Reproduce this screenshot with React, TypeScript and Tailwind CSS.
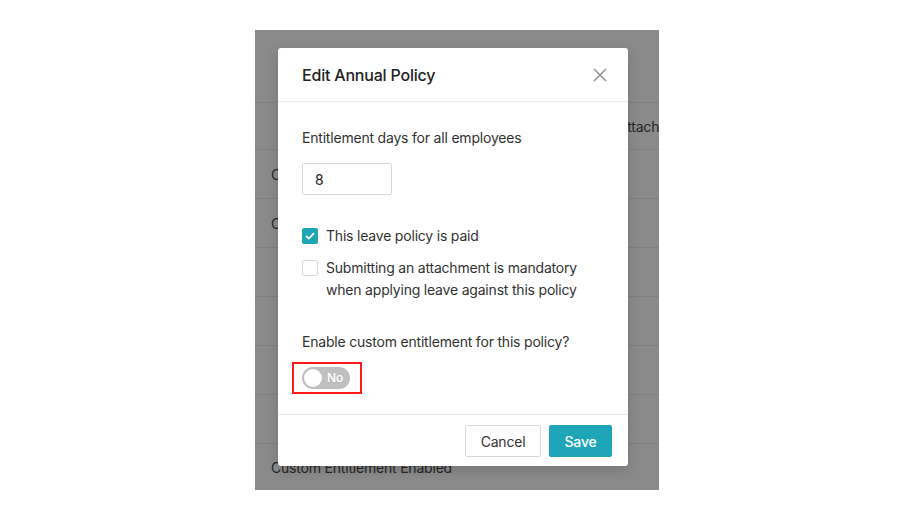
import React, { useState } from "react";

const rows = ["C", "C", "", "", "", ""];

const App = () => {
  const [paid, setPaid] = useState(true);
  const [mandatory, setMandatory] = useState(false);
  const [custom, setCustom] = useState(false);
  const [days, setDays] = useState("8");

  return (
    <div
      className="w-full h-[521px] bg-white pt-[30px] pl-[255px] tracking-[-0.2px]"
      style={{ fontFamily: "Inter, 'Noto Sans', sans-serif" }}
    >
      <div className="relative w-[404px] h-[460px] bg-[#8a8a8a] overflow-hidden text-[14px] text-[#262626]">
        {/* page behind the overlay */}
        <div className="h-[72px]" />
        <div className="h-[47px] border-t border-[#7f7f7f] flex items-center pl-[363px] whitespace-nowrap">
          Attachment
        </div>
        {rows.map((r, i) => (
          <div key={i} className="h-[49px] border-t border-[#7f7f7f] flex items-center pl-[16px]">
            {r}
          </div>
        ))}
        <div className="h-[47px] border-t border-[#7f7f7f] flex items-center pl-[16px] whitespace-nowrap">
          Custom Entitlement Enabled
        </div>

        {/* modal */}
        <div className="absolute left-[23px] top-[18px] w-[350px] bg-white rounded-[3px] shadow-[0_4px_12px_rgba(0,0,0,0.15)] flex flex-col">
          <div className="h-[54px] border-b border-[#e8e8e8] flex items-center justify-between pl-[24px] pr-[20px]">
            <span className="text-[16px] font-medium text-[#222]">Edit Annual Policy</span>
            <button className="w-[16px] h-[16px] flex items-center justify-center text-[#8c8c8c]">
              <svg width="14" height="14" viewBox="0 0 14 14" fill="none" stroke="currentColor" strokeWidth="1.4">
                <path d="M1 1L13 13M13 1L1 13" />
              </svg>
            </button>
          </div>

          <div className="px-[24px] pt-[26px] pb-[20px] flex flex-col text-[14px] text-[#333]">
            <label className="leading-[20px]">Entitlement days for all employees</label>
            <input
              value={days}
              onChange={(e) => setDays(e.target.value)}
              className="mt-[15px] w-[90px] h-[32px] border border-[#d9d9d9] rounded-[2px] px-[12px] text-[14px] text-[#222] outline-none"
            />

            <div className="mt-[30px] flex items-start gap-[8px] leading-[22px] cursor-pointer" onClick={() => setPaid(!paid)}>
              <span
                className={
                  paid
                    ? "mt-[3px] w-[16px] h-[16px] rounded-[2px] bg-[#1fa5b8] border border-[#1fa5b8] flex items-center justify-center shrink-0"
                    : "mt-[3px] w-[16px] h-[16px] rounded-[2px] bg-white border border-[#d9d9d9] shrink-0"
                }
              >
                {paid && (
                  <svg width="10" height="8" viewBox="0 0 10 8" fill="none" stroke="white" strokeWidth="1.8">
                    <path d="M1 4L3.8 6.6L9 1.2" />
                  </svg>
                )}
              </span>
              <span>This leave policy is paid</span>
            </div>

            <div className="mt-[10px] flex items-start gap-[8px] leading-[22px] cursor-pointer" onClick={() => setMandatory(!mandatory)}>
              <span
                className={
                  mandatory
                    ? "mt-[3px] w-[16px] h-[16px] rounded-[2px] bg-[#1fa5b8] border border-[#1fa5b8] flex items-center justify-center shrink-0"
                    : "mt-[3px] w-[16px] h-[16px] rounded-[2px] bg-white border border-[#d9d9d9] shrink-0"
                }
              >
                {mandatory && (
                  <svg width="10" height="8" viewBox="0 0 10 8" fill="none" stroke="white" strokeWidth="1.8">
                    <path d="M1 4L3.8 6.6L9 1.2" />
                  </svg>
                )}
              </span>
              <span>
                Submitting an attachment is mandatory
                <br />
                when applying leave against this policy
              </span>
            </div>

            <label className="mt-[31px] leading-[20px]">Enable custom entitlement for this policy?</label>
            <div className="mt-[10px] -ml-[10px] w-[70px] h-[32px] border-2 border-[#ff1a1a] flex items-center pl-[8px]">
              <button
                onClick={() => setCustom(!custom)}
                className={
                  custom
                    ? "relative w-[48px] h-[22px] rounded-full bg-[#1fa5b8] flex items-center"
                    : "relative w-[48px] h-[22px] rounded-full bg-[#bfbfbf] flex items-center"
                }
              >
                <span
                  className={
                    custom
                      ? "absolute right-[2px] top-[2px] w-[18px] h-[18px] rounded-full bg-white"
                      : "absolute left-[2px] top-[2px] w-[18px] h-[18px] rounded-full bg-white"
                  }
                />
                <span
                  className={
                    custom
                      ? "text-[12px] font-medium text-white pl-[8px]"
                      : "text-[12px] font-medium text-white pl-[25px]"
                  }
                >
                  {custom ? "Yes" : "No"}
                </span>
              </button>
            </div>
          </div>

          <div className="h-[52px] border-t border-[#e8e8e8] flex items-start justify-end gap-[8px] pt-[10px] pr-[16px]">
            <button className="h-[32px] w-[76px] border border-[#d9d9d9] rounded-[2px] bg-white text-[14px] text-[#333]">
              Cancel
            </button>
            <button className="h-[32px] w-[63px] rounded-[2px] bg-[#1fa5b8] text-[14px] font-medium text-white">
              Save
            </button>
          </div>
        </div>
      </div>
    </div>
  );
};

export default App;
